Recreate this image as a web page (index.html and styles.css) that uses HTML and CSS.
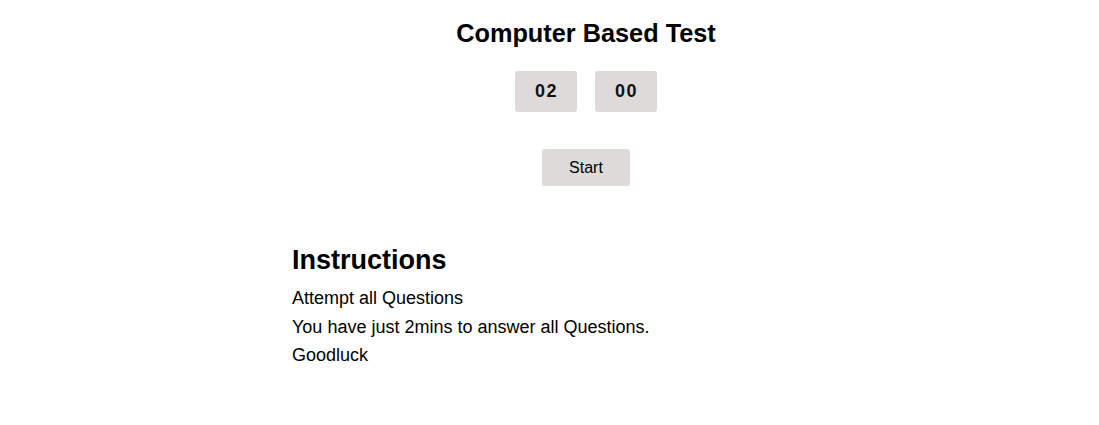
FILE: index.html
```html
<!DOCTYPE html>
<html>
<head>
<meta charset="utf-8">
<link rel="stylesheet" href="styles.css">
</head>
<body>
<div class="wrap">
  <h1 class="title">Computer Based Test</h1>
  <div class="timer">
    <div class="cell">02</div>
    <div class="cell">00</div>
  </div>
  <div class="actions">
    <button class="start">Start</button>
  </div>
  <section class="instructions">
    <h2>Instructions</h2>
    <p>Attempt all Questions</p>
    <p>You have just 2mins to answer all Questions.</p>
    <p>Goodluck</p>
  </section>
</div>
</body>
</html>
```

FILE: styles.css
```css
html, body {
  margin: 0;
  padding: 0;
  background: #fff;
}
body {
  font-family: "Liberation Sans", Arial, sans-serif;
  color: #000;
}
.wrap {
  width: 588px;
  margin-left: 292px;
  display: flex;
  flex-direction: column;
}
.title {
  margin: 18px 0 0;
  font-size: 25.3px;
  font-weight: bold;
  line-height: 30px;
  text-align: center;
}
.timer {
  display: flex;
  justify-content: center;
  gap: 18px;
  margin-top: 23px;
}
.cell {
  width: 62px;
  height: 41px;
  background: #dedada;
  border-radius: 3px;
  display: flex;
  align-items: center;
  justify-content: center;
  font-size: 18px;
  font-weight: 600;
  letter-spacing: 1.5px;
  padding-left: 1px;
  box-sizing: border-box;
  color: #111;
}
.actions {
  display: flex;
  justify-content: center;
  margin-top: 37px;
}
.start {
  width: 88px;
  height: 37px;
  background: #dedada;
  border: none;
  border-radius: 3px;
  font-family: "Liberation Sans", Arial, sans-serif;
  font-size: 16px;
  color: #000;
  padding: 0;
}
.instructions {
  margin-top: 56px;
}
.instructions h2 {
  margin: 0 0 5px;
  font-size: 27px;
  font-weight: bold;
  line-height: 37px;
}
.instructions p {
  margin: 0;
  font-size: 18px;
  line-height: 28.5px;
}
```
